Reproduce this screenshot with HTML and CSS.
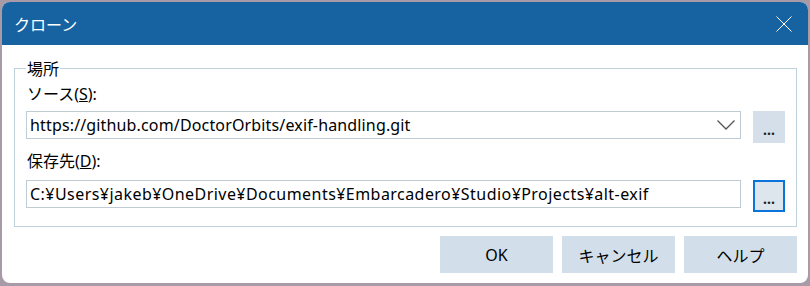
FILE: index.html
```html
<!DOCTYPE html>
<html lang="ja">
<head>
    <meta charset="UTF-8">
    <title>クローン</title>
    <link rel="stylesheet" href="styles.css">
</head>
<body>
    <div class="dialog">
        <div class="title-bar">
            <span class="title">クローン</span>
            <button class="close-btn" aria-label="閉じる">
                <svg width="16" height="16" viewBox="0 0 16 16">
                    <path d="M0.5 0.5 L15.5 15.5 M15.5 0.5 L0.5 15.5" stroke="#fff" stroke-width="1" fill="none"/>
                </svg>
            </button>
        </div>

        <div class="dialog-body">
            <fieldset class="group">
                <legend>場所</legend>

                <label class="field-label first">ソース(<u>S</u>):</label>
                <div class="field-row">
                    <div class="input combo">
                        <span class="value">https://github.com/DoctorOrbits/exif-handling.git</span>
                        <svg class="chevron" width="18" height="10" viewBox="0 0 18 10">
                            <path d="M0.5 0.5 L9 9 L17.5 0.5" stroke="#555" stroke-width="1.3" fill="none"/>
                        </svg>
                    </div>
                    <button class="browse-btn">...</button>
                </div>

                <label class="field-label second">保存先(<u>D</u>):</label>
                <div class="field-row">
                    <div class="input">
                        <span class="value path">C:¥Users¥jakeb¥OneDrive¥Documents¥Embarcadero¥Studio¥Projects¥alt-exif</span>
                    </div>
                    <button class="browse-btn focused">...</button>
                </div>
            </fieldset>

            <div class="actions">
                <button class="btn">OK</button>
                <button class="btn">キャンセル</button>
                <button class="btn">ヘルプ</button>
            </div>
        </div>
    </div>
</body>
</html>
```

FILE: styles.css
```css
* {
    margin: 0;
    padding: 0;
    box-sizing: border-box;
}

body {
    background: #a89aa7;
    font-family: "Noto Sans", "Noto Sans CJK JP", sans-serif;
    font-size: 16px;
    color: #000;
    width: 810px;
    height: 286px;
    overflow: hidden;
}

.dialog {
    margin: 2px 0 0 2px;
    width: 806px;
    height: 281px;
    background: #fff;
    border-radius: 8px;
    overflow: hidden;
}

.title-bar {
    height: 43px;
    background: #1763a1;
    display: flex;
    align-items: center;
    justify-content: space-between;
    padding: 0 16px 0 12px;
}

.title {
    color: #fff;
    font-family: "Noto Sans CJK JP", sans-serif;
    font-size: 16px;
}

.close-btn {
    background: none;
    border: none;
    width: 16px;
    height: 16px;
    display: flex;
}

.dialog-body {
    padding: 13px 11px 0 12px;
}

.group {
    border: 1px solid #bfd1da;
    padding: 0 11px 14px 11px;
}

.group legend {
    font-family: "Noto Sans CJK JP", sans-serif;
    padding: 0 1px;
    line-height: 20px;
}

.field-label {
    display: block;
    font-family: "Noto Sans", "Noto Sans CJK JP", sans-serif;
    line-height: 20px;
    margin-left: 1px;
}

.field-label.first {
    margin-top: 6px;
    margin-bottom: 7px;
}

.field-label.second {
    margin-top: 8px;
    margin-bottom: 9px;
}

.field-row {
    display: flex;
    gap: 12px;
    align-items: flex-start;
}

.input {
    flex: 1;
    height: 28px;
    border: 1px solid #bfccd4;
    display: flex;
    align-items: center;
    padding: 0 5px 0 3px;
}

.value {
    flex: 1;
    white-space: nowrap;
    letter-spacing: 0.15px;
}

.value.path {
    letter-spacing: 0.45px;
}

.browse-btn {
    width: 32px;
    height: 32px;
    background: #d4dfe9;
    border: none;
    font-family: "Noto Sans", sans-serif;
    font-size: 14px;
    font-weight: bold;
    line-height: 32px;
    padding-top: 3px;
    color: #222;
}

.browse-btn.focused {
    border: 2px solid #0a74d8;
    background: #dde5ed;
    line-height: 28px;
}

.actions {
    display: flex;
    justify-content: flex-end;
    gap: 9px;
    margin-top: 9px;
}

.btn {
    width: 113px;
    height: 37px;
    background: #d2dee9;
    border: none;
    font-family: "Noto Sans", "Noto Sans CJK JP", sans-serif;
    font-size: 16px;
    color: #000;
}
```
